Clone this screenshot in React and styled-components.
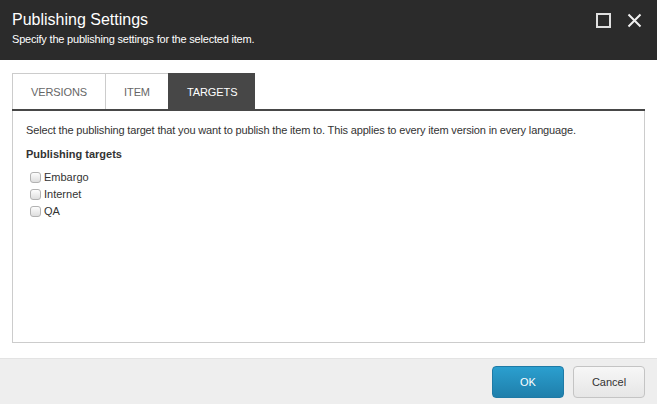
import React, { useState } from "react";
import styled, { createGlobalStyle } from "styled-components";

const Global = createGlobalStyle`
  html, body {
    margin: 0;
    padding: 0;
    background: #fff;
  }
  body {
    font-family: "Liberation Sans", Arial, sans-serif;
    color: #333;
  }
  * {
    box-sizing: border-box;
  }
`;

const Dialog = styled.div`
  width: 657px;
  height: 404px;
  display: flex;
  flex-direction: column;
  background: #fff;
  overflow: hidden;
`;

const Header = styled.header`
  height: 60px;
  flex-shrink: 0;
  padding: 10px 12px 0;
  background-color: #2b2b2b;
  color: #fff;
  display: flex;
  justify-content: space-between;
  align-items: flex-start;

  h1 {
    margin: 0;
    font-size: 16px;
    font-weight: normal;
    line-height: 20px;
  }
  p {
    margin: 3px 0 0;
    font-size: 11px;
    line-height: 13px;
    letter-spacing: -0.2px;
  }
`;

const WindowButtons = styled.div`
  display: flex;
  gap: 16px;
  padding-top: 3px;
  padding-right: 3px;
`;

const IconButton = styled.button`
  width: 15px;
  height: 15px;
  padding: 0;
  border: 0;
  background: none;
  display: block;
  cursor: pointer;
`;

const Body = styled.main`
  flex: 1;
  padding: 13px 12px 15px;
  display: flex;
  flex-direction: column;
`;

const TabBar = styled.ul`
  list-style: none;
  margin: 0;
  padding: 0;
  display: flex;
  border-bottom: 2px solid #474747;
`;

const Tab = styled.li`
  height: 36px;
  padding: 0 18px;
  display: flex;
  align-items: center;
  font-size: 11px;
  letter-spacing: -0.1px;
  text-transform: uppercase;
  color: ${(p) => (p.$active ? "#fff" : "#666")};
  background-color: ${(p) => (p.$active ? "#474747" : "#fff")};
  border-top: 1px solid ${(p) => (p.$active ? "#474747" : "#ccc")};
  border-left: 1px solid ${(p) => (p.$active ? "#474747" : "#ccc")};
  cursor: pointer;
  &:first-child {
    border-left-color: #ccc;
  }
`;

const Panel = styled.section`
  flex: 1;
  border: 1px solid #ccc;
  border-top: 0;
  padding: 12px 13px;
  font-size: 11px;

  .intro {
    margin: 0;
    line-height: 14px;
    letter-spacing: -0.15px;
  }
  h3 {
    margin: 10px 0 9px;
    font-size: 11px;
    font-weight: bold;
    line-height: 14px;
  }
`;

const CheckList = styled.div`
  display: flex;
  flex-direction: column;
  gap: 3px;
`;

const CheckRow = styled.label`
  display: flex;
  align-items: center;
  gap: 3px;
  height: 14px;
  color: #333;
`;

const Box = styled.span`
  width: 11px;
  height: 11px;
  margin-left: 4px;
  border: 1px solid #b2b2b2;
  border-radius: 3px;
  background: linear-gradient(#fdfdfd, #dedede);
  input {
    display: none;
  }
`;

const Footer = styled.footer`
  height: 46px;
  flex-shrink: 0;
  border-top: 1px solid #e3e3e3;
  background-color: #eeeeee;
  display: flex;
  justify-content: flex-end;
  align-items: flex-start;
  gap: 9px;
  padding: 7px 12px 0 0;
`;

const Button = styled.button`
  width: 72px;
  height: 32px;
  border-radius: 4px;
  font-family: "Liberation Sans", Arial, sans-serif;
  font-size: 11px;
  cursor: pointer;
  color: ${(p) => (p.$primary ? "#fff" : "#333")};
  border: 1px solid ${(p) => (p.$primary ? "#1e7aa6" : "#c4c4c4")};
  background: ${(p) =>
    p.$primary
      ? "linear-gradient(#2b9fcf, #1f7fab)"
      : "linear-gradient(#f7f7f7, #e6e6e6)"};
`;

const tabs = ["Versions", "Item", "Targets"];

const targets = ["Embargo", "Internet", "QA"];

export default function App() {
  const [active, setActive] = useState("Targets");
  return (
    <Dialog>
      <Global />
      <Header>
        <div>
          <h1>Publishing Settings</h1>
          <p>Specify the publishing settings for the selected item.</p>
        </div>
        <WindowButtons>
          <IconButton aria-label="Maximize">
            <svg width="15" height="15" viewBox="0 0 15 15">
              <rect x="1" y="1" width="13" height="13" fill="none" stroke="#e0e0e0" strokeWidth="2" />
            </svg>
          </IconButton>
          <IconButton aria-label="Close">
            <svg width="15" height="15" viewBox="0 0 15 15">
              <path d="M1.5 1.5 L13.5 13.5 M13.5 1.5 L1.5 13.5" stroke="#f0f0f0" strokeWidth="2" />
            </svg>
          </IconButton>
        </WindowButtons>
      </Header>
      <Body>
        <TabBar>
          {tabs.map((t) => (
            <Tab key={t} $active={active === t} onClick={() => setActive(t)}>
              {t}
            </Tab>
          ))}
        </TabBar>
        <Panel>
          <p className="intro">
            Select the publishing target that you want to publish the item to. This applies to
            every item version in every language.
          </p>
          <h3>Publishing targets</h3>
          <CheckList>
            {targets.map((t) => (
              <CheckRow key={t}>
                <Box>
                  <input type="checkbox" />
                </Box>
                {t}
              </CheckRow>
            ))}
          </CheckList>
        </Panel>
      </Body>
      <Footer>
        <Button $primary>OK</Button>
        <Button>Cancel</Button>
      </Footer>
    </Dialog>
  );
}
